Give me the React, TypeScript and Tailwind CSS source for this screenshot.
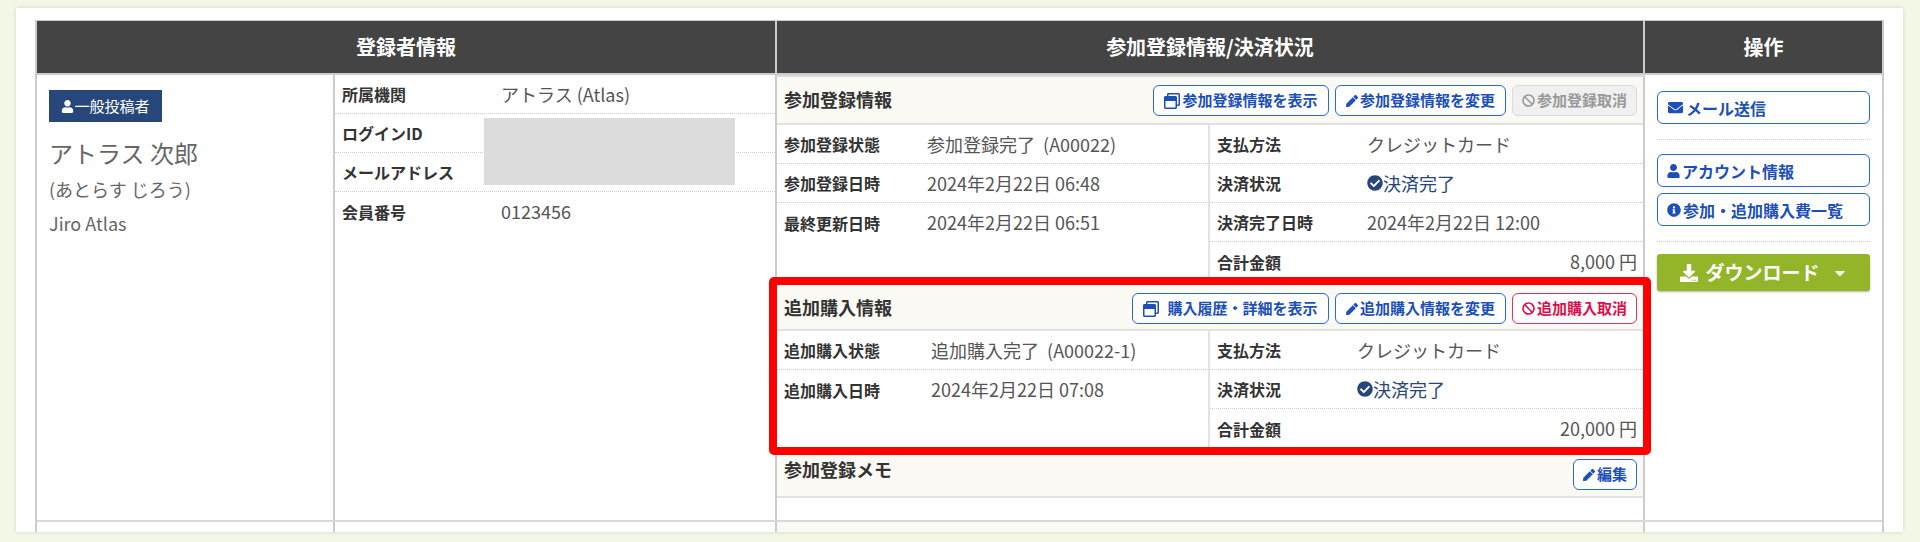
import React from "react";
import { FaUser, FaEnvelope, FaInfoCircle, FaCheckCircle, FaPen, FaBan, FaDownload, FaCaretDown, FaRegWindowRestore } from "react-icons/fa";

const font = { fontFamily: '"Noto Sans CJK JP", sans-serif' };

function Btn({ icon, children, tone = "blue", className = "" }: { icon: React.ReactNode; children: React.ReactNode; tone?: "blue" | "gray" | "red"; className?: string }) {
  const tones = {
    blue: "border-[#2a67d0] text-[#1c4fb8] bg-white",
    gray: "border-[#dadada] text-[#999] bg-[#f0f0f0]",
    red: "border-[#e0315f] text-[#dc0f4a] bg-white",
  };
  return (
    <div className={`h-[31px] flex items-center justify-center rounded-md border text-[15px] font-bold whitespace-nowrap ${tones[tone]} ${className}`}>
      {icon}
      {children}
    </div>
  );
}

function Row({ label, children, bordered = true, pad, className = "" }: { label: string; children?: React.ReactNode; bordered?: boolean; pad: string; className?: string }) {
  return (
    <div className={`h-[39px] flex items-center pl-[7px] ${bordered ? "border-b border-dotted border-[#ccc]" : ""} ${className}`}>
      <div className={`shrink-0 text-[16px] font-bold text-[#333] ${pad}`}>{label}</div>
      {children}
    </div>
  );
}

function V({ children }: { children: React.ReactNode }) {
  return <div className="text-[18px] text-[#555] whitespace-nowrap">{children}</div>;
}

function Paid() {
  return (
    <div className="text-[18px] text-[#27477b] flex items-center whitespace-nowrap">
      <FaCheckCircle className="w-[16px] h-[16px]" />
      決済完了
    </div>
  );
}

function SubHead({ title, children, h = "h-[48px]" }: { title: string; children: React.ReactNode; h?: string }) {
  return (
    <div className={`${h} flex items-start justify-between bg-[#faf9f4] border-b-2 border-[#e2e2e2] pl-[7px] pr-[6px]`}>
      <div className="text-[18px] font-bold text-[#333] mt-[4px] leading-[36px]">{title}</div>
      <div className="flex gap-[6px] mt-[8px]">{children}</div>
    </div>
  );
}

export default function App() {
  return (
    <div className="h-[542px] bg-[#f3f8e6] pt-[8px] pl-[16px] pr-[17px] overflow-hidden" style={font}>
      <div className="h-[524px] bg-white pt-[12px] pl-[19px] pr-[19px] shadow-[0_0_4px_rgba(0,0,0,0.15)] overflow-hidden">
        <div className="border-l-2 border-r-2 border-t border-[#ccc]">
          <div className="flex h-[54px] bg-[#444] text-white text-[20px] font-bold border-b-2 border-[#ccc]">
            <div className="w-[740px] flex items-center justify-center border-r-2 border-[#ccc]">登録者情報</div>
            <div className="w-[868px] flex items-center justify-center border-r-2 border-[#ccc]">参加登録情報/決済状況</div>
            <div className="flex-1 flex items-center justify-center">操作</div>
          </div>

          <div className="flex h-[447px] border-b-2 border-[#d8d8d8]">
            <div className="w-[298px] border-r-2 border-[#ccc] pt-[15px] pl-[12px] text-[#666]">
              <div className="w-[113px] h-[32px] bg-[#27477b] text-white text-[15px] flex items-center justify-center">
                <FaUser className="w-[13px] h-[13px]" />一般投稿者
              </div>
              <div className="text-[24px] leading-[32px] mt-[15px]">アトラス 次郎</div>
              <div className="text-[18px] leading-[28px] mt-[6px]">(あとらす じろう)</div>
              <div className="text-[18px] leading-[28px] mt-[6px]">Jiro Atlas</div>
            </div>
            <div className="w-[442px] border-r-2 border-[#ccc] relative">
              <Row label="所属機関" pad="w-[159px]" className="pl-[3px]"><V>アトラス (Atlas)</V></Row>
              <Row label="ログインID" pad="w-[159px]" className="pl-[3px]" />
              <Row label="メールアドレス" pad="w-[159px]" className="pl-[3px]" />
              <Row label="会員番号" pad="w-[159px]" bordered={false} className="pl-[3px]"><V>0123456</V></Row>
              <div className="absolute left-[149px] top-[43px] w-[251px] h-[67px] bg-[#dcdcdc]" />
            </div>
            <div className="w-[868px] border-r-2 border-[#ccc] border-t-2 border-t-[#ddd]">
              <SubHead title="参加登録情報">
                <Btn className="w-[176px]" icon={<FaRegWindowRestore className="w-[16px] h-[16px] mr-[2px]" />}>参加登録情報を表示</Btn>
                <Btn className="w-[171px]" icon={<FaPen className="w-[12px] h-[12px] mr-[2px]" />}>参加登録情報を変更</Btn>
                <Btn className="w-[125px]" tone="gray" icon={<FaBan className="w-[13px] h-[13px] mr-[2px]" />}>参加登録取消</Btn>
              </SubHead>
              <div className="flex h-[160px]">
                <div className="w-[433px] border-r-2 border-[#e2e2e2]">
                  <Row label="参加登録状態" pad="w-[143px]"><V>参加登録完了 &nbsp;(A00022)</V></Row>
                  <Row label="参加登録日時" pad="w-[143px]"><V>2024年2月22日 06:48</V></Row>
                  <Row label="最終更新日時" pad="w-[143px]" bordered={false}><V>2024年2月22日 06:51</V></Row>
                </div>
                <div className="flex-1">
                  <Row label="支払方法" pad="w-[150px]"><V>クレジットカード</V></Row>
                  <Row label="決済状況" pad="w-[150px]"><Paid /></Row>
                  <Row label="決済完了日時" pad="w-[150px]"><V>2024年2月22日 12:00</V></Row>
                  <Row label="合計金額" pad="flex-1" bordered={false} className="pr-[6px]"><V>8,000 円</V></Row>
                </div>
              </div>

              <section className="relative h-[162px]">
                <SubHead title="追加購入情報" h="h-[46px]">
                  <Btn className="w-[197px]" icon={<FaRegWindowRestore className="w-[16px] h-[16px] mr-[8px]" />}>購入履歴・詳細を表示</Btn>
                  <Btn className="w-[171px]" icon={<FaPen className="w-[12px] h-[12px] mr-[2px]" />}>追加購入情報を変更</Btn>
                  <Btn className="w-[125px]" tone="red" icon={<FaBan className="w-[13px] h-[13px] mr-[2px]" />}>追加購入取消</Btn>
                </SubHead>
                <div className="flex h-[116px]">
                  <div className="w-[433px] border-r-2 border-[#e2e2e2]">
                    <Row label="追加購入状態" pad="w-[147px]"><V>追加購入完了 &nbsp;(A00022-1)</V></Row>
                    <Row label="追加購入日時" pad="w-[147px]" bordered={false}><V>2024年2月22日 07:08</V></Row>
                  </div>
                  <div className="flex-1">
                    <Row label="支払方法" pad="w-[140px]"><V>クレジットカード</V></Row>
                    <Row label="決済状況" pad="w-[140px]"><Paid /></Row>
                    <Row label="合計金額" pad="flex-1" bordered={false} className="pr-[6px]"><V>20,000 円</V></Row>
                  </div>
                </div>
                <div className="absolute -inset-x-[8px] -inset-y-[8px] border-[8px] border-[#f00] rounded-[5px] pointer-events-none" />
              </section>

              <SubHead title="参加登録メモ" h="h-[51px]">
                <Btn className="w-[64px] mt-[4px]" icon={<FaPen className="w-[12px] h-[12px] mr-[2px]" />}>編集</Btn>
              </SubHead>
            </div>
            <div className="flex-1 pt-[16px] px-[12px]">
              <Btn className="w-full !justify-start pl-[9px] !h-[33px] text-[16px]" icon={<FaEnvelope className="w-[17px] h-[15px] mr-[2px]" />}>メール送信</Btn>
              <div className="border-b border-dotted border-[#ccc] mt-[15px] mb-[14px]" />
              <Btn className="w-full !justify-start pl-[9px] !h-[33px] text-[16px]" icon={<FaUser className="w-[13px] h-[14px] mr-[2px]" />}>アカウント情報</Btn>
              <Btn className="w-full !justify-start pl-[9px] !h-[33px] text-[16px] mt-[6px]" icon={<FaInfoCircle className="w-[14px] h-[14px] mr-[2px]" />}>参加・追加購入費一覧</Btn>
              <div className="border-b border-dotted border-[#ccc] mt-[15px] mb-[12px]" />
              <div className="h-[37px] bg-[#93b529] rounded-[3px] shadow-[0_1px_2px_rgba(0,0,0,0.3)] text-white text-[19px] font-bold flex items-center justify-center">
                <FaDownload className="w-[20px] h-[18px] mr-[6px]" />ダウンロード<FaCaretDown className="w-[16px] h-[16px] ml-[12px]" />
              </div>
            </div>
          </div>

          <div className="flex h-[10px]">
            <div className="w-[298px] border-r-2 border-[#ccc]" />
            <div className="w-[442px] border-r-2 border-[#ccc]" />
            <div className="w-[868px] border-r-2 border-[#ccc] bg-[#faf9f4]" />
          </div>
        </div>
      </div>
    </div>
  );
}
